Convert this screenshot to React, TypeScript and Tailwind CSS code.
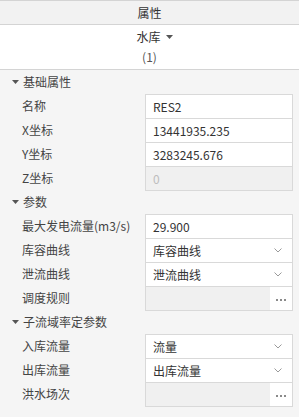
import React from 'react';

type Row = {
  label: string;
  kind: 'text' | 'disabled' | 'select' | 'picker';
  value?: string;
};

const sections: { title: string; rows: Row[] }[] = [
  {
    title: '基础属性',
    rows: [
      { label: '名称', kind: 'text', value: 'RES2' },
      { label: 'X坐标', kind: 'text', value: '13441935.235' },
      { label: 'Y坐标', kind: 'text', value: '3283245.676' },
      { label: 'Z坐标', kind: 'disabled', value: '0' },
    ],
  },
  {
    title: '参数',
    rows: [
      { label: '最大发电流量(m3/s)', kind: 'text', value: '29.900' },
      { label: '库容曲线', kind: 'select', value: '库容曲线' },
      { label: '泄流曲线', kind: 'select', value: '泄流曲线' },
      { label: '调度规则', kind: 'picker' },
    ],
  },
  {
    title: '子流域率定参数',
    rows: [
      { label: '入库流量', kind: 'select', value: '流量' },
      { label: '出库流量', kind: 'select', value: '出库流量' },
      { label: '洪水场次', kind: 'picker' },
    ],
  },
];

const Caret = () => (
  <svg width="7" height="4" viewBox="0 0 7 4" className="shrink-0">
    <path d="M0 0 H7 L3.5 4 Z" fill="#555" />
  </svg>
);

const Chevron = () => (
  <svg width="8" height="5" viewBox="0 0 8 5">
    <path d="M0.5 0.5 L4 4 L7.5 0.5" fill="none" stroke="#9a9a9a" strokeWidth="1" />
  </svg>
);

const Dots = () => (
  <div className="flex gap-[2px]">
    <span className="w-[2px] h-[2px] bg-[#8a8a8a]" />
    <span className="w-[2px] h-[2px] bg-[#8a8a8a]" />
    <span className="w-[2px] h-[2px] bg-[#8a8a8a]" />
  </div>
);

const Field = ({ row }: { row: Row }) => {
  const base = 'h-[25px] w-[148px] -mb-px border border-[#d9d9d9] flex items-center';
  if (row.kind === 'disabled') {
    return <div className={`${base} bg-[#f0f0f0] pl-[7px] text-[#bdbdbd]`}>{row.value}</div>;
  }
  if (row.kind === 'picker') {
    return (
      <div className={`${base} bg-[#f0f0f0]`}>
        <div className="flex-1" />
        <div className="w-[22px] h-full bg-white flex items-center justify-center pt-[2px]">
          <Dots />
        </div>
      </div>
    );
  }
  if (row.kind === 'select') {
    return (
      <div className={`${base} bg-white pl-[7px] pr-[10px] justify-between text-[#333]`}>
        <span>{row.value}</span>
        <Chevron />
      </div>
    );
  }
  return <div className={`${base} bg-white pl-[7px] text-[#333]`}>{row.value}</div>;
};

export default function App() {
  return (
    <div
      className="w-[299px] h-[417px] bg-[#f5f5f5] text-[12px] text-[#444] overflow-hidden"
      style={{ fontFamily: '"Noto Sans CJK SC", "Noto Sans", sans-serif' }}
    >
      <div className="h-[25px] bg-[#f2f2f2] border-t border-b border-[#d4d4d4] flex items-center justify-center text-[#333]">
        属性
      </div>
      <div className="h-[45px] bg-white border-b border-[#d4d4d4] flex flex-col items-center justify-center gap-[2px] text-[#333]">
        <div className="flex items-center gap-[5px] pl-[10px]">
          <span>水库</span>
          <Caret />
        </div>
        <div className="text-[#555]">(1)</div>
      </div>
      {sections.map((s) => (
        <div key={s.title}>
          <div className="h-[24px] flex items-center pl-[12px] gap-[4px] text-[#444]">
            <Caret />
            <span>{s.title}</span>
          </div>
          {s.rows.map((r) => (
            <div key={r.label} className="h-[24px] flex items-start">
              <div className="w-[145px] pl-[22px] h-[24px] flex items-center text-[#444]">{r.label}</div>
              <Field row={r} />
            </div>
          ))}
        </div>
      ))}
    </div>
  );
}
